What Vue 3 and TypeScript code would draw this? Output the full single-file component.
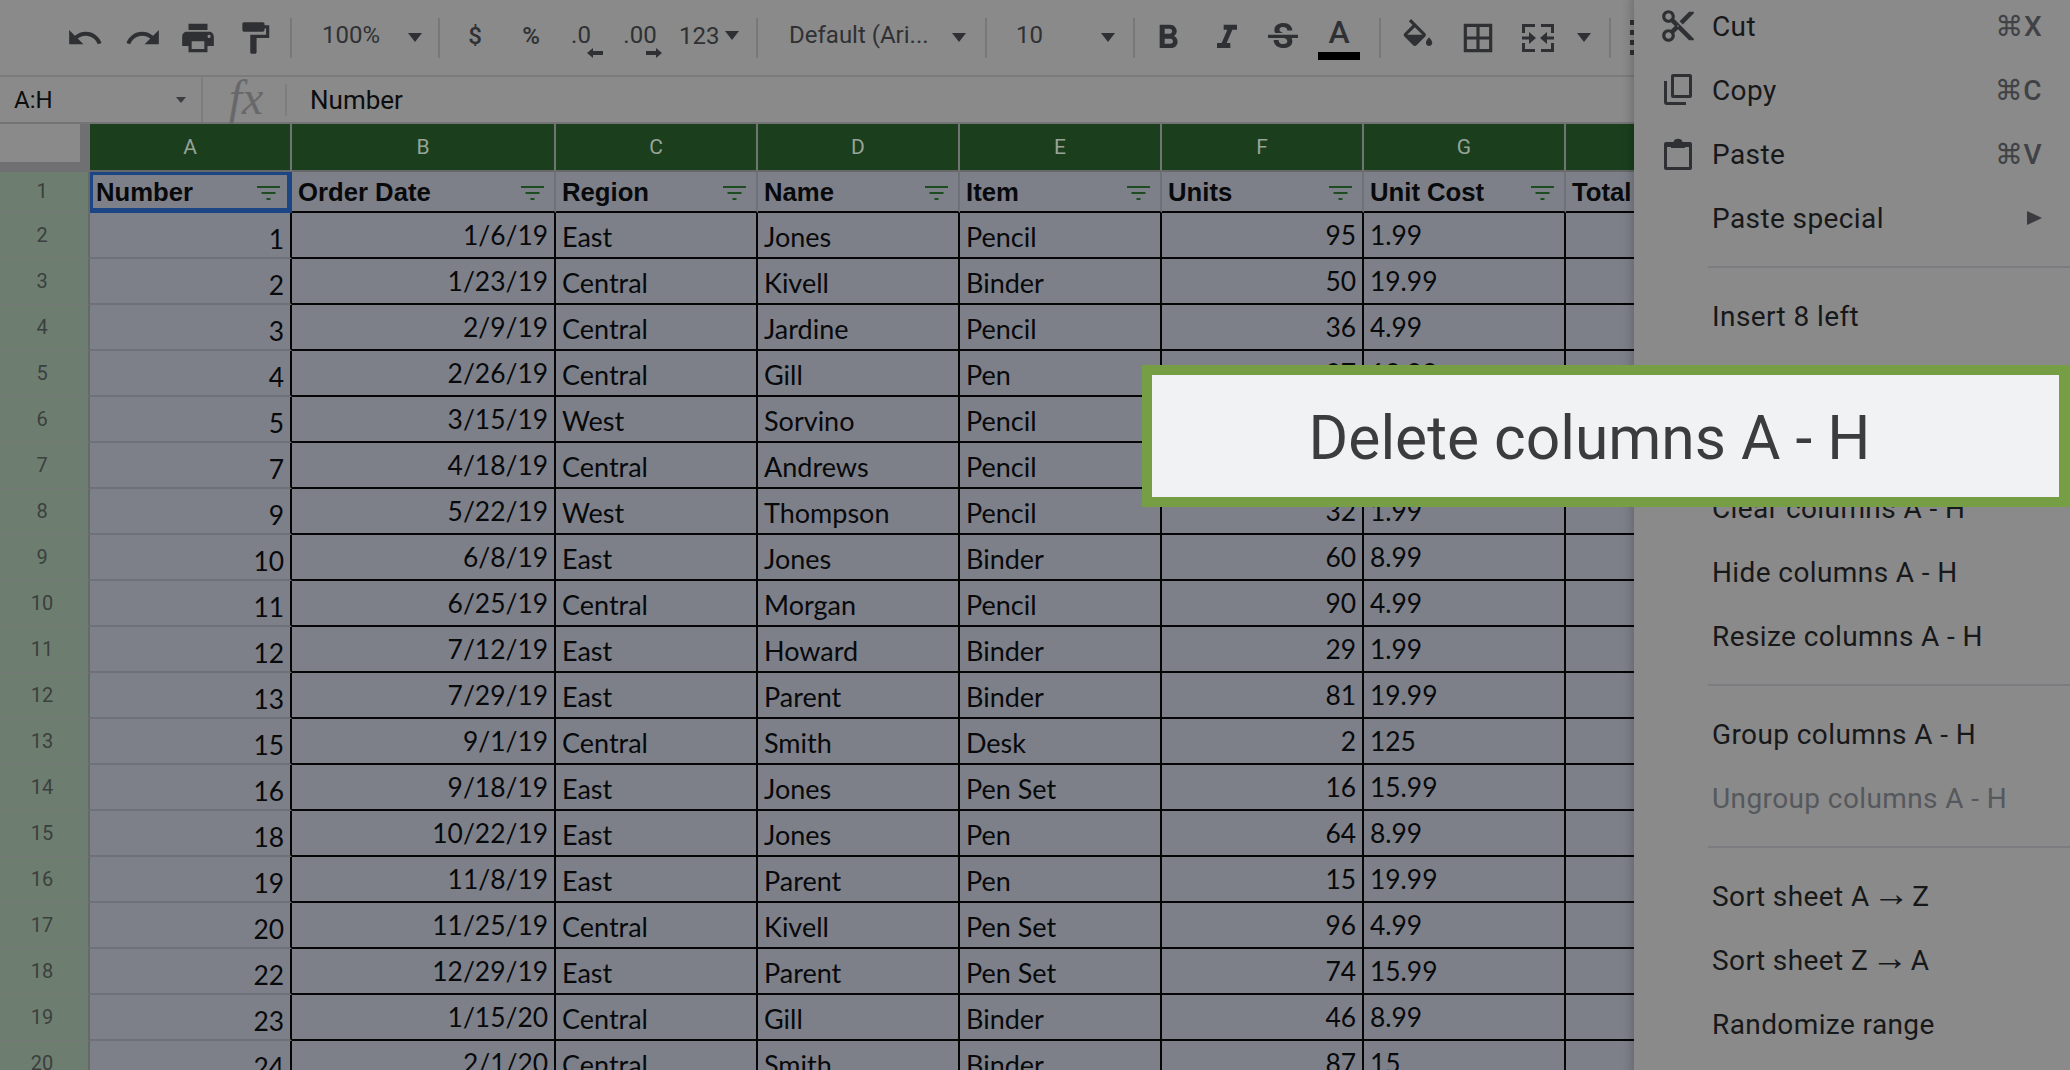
<script setup lang="ts">
interface Row { n: string; num: string; date: string; region: string; name: string; item: string; units: string; cost: string }
const raw = `1|1/6/19|East|Jones|Pencil|95|1.99
2|1/23/19|Central|Kivell|Binder|50|19.99
3|2/9/19|Central|Jardine|Pencil|36|4.99
4|2/26/19|Central|Gill|Pen|27|19.99
5|3/15/19|West|Sorvino|Pencil|56|2.99
7|4/18/19|Central|Andrews|Pencil|75|1.99
9|5/22/19|West|Thompson|Pencil|32|1.99
10|6/8/19|East|Jones|Binder|60|8.99
11|6/25/19|Central|Morgan|Pencil|90|4.99
12|7/12/19|East|Howard|Binder|29|1.99
13|7/29/19|East|Parent|Binder|81|19.99
15|9/1/19|Central|Smith|Desk|2|125
16|9/18/19|East|Jones|Pen Set|16|15.99
18|10/22/19|East|Jones|Pen|64|8.99
19|11/8/19|East|Parent|Pen|15|19.99
20|11/25/19|Central|Kivell|Pen Set|96|4.99
22|12/29/19|East|Parent|Pen Set|74|15.99
23|1/15/20|Central|Gill|Binder|46|8.99
24|2/1/20|Central|Smith|Binder|87|15`
const rows: Row[] = raw.split('\n').map((l, i) => {
  const p = l.split('|')
  return { n: String(i + 2), num: p[0], date: p[1], region: p[2], name: p[3], item: p[4], units: p[5], cost: p[6] }
})
const cols = ['A', 'B', 'C', 'D', 'E', 'F', 'G', '']
const heads = ['Number', 'Order Date', 'Region', 'Name', 'Item', 'Units', 'Unit Cost', 'Total']
type Entry = { label?: string; key?: string; icon?: string; sub?: boolean; off?: boolean; sep?: boolean; sort?: [string, string] }
const menu: Entry[] = [
  { label: 'Cut', key: 'X', icon: 'cut' },
  { label: 'Copy', key: 'C', icon: 'copy' },
  { label: 'Paste', key: 'V', icon: 'paste' },
  { label: 'Paste special', sub: true },
  { sep: true },
  { label: 'Insert 8 left' },
  { label: 'Insert 8 right' },
  { label: 'Delete columns A - H' },
  { label: 'Clear columns A - H' },
  { label: 'Hide columns A - H' },
  { label: 'Resize columns A - H' },
  { sep: true },
  { label: 'Group columns A - H' },
  { label: 'Ungroup columns A - H', off: true },
  { sep: true },
  { sort: ['Sort sheet A ', ' Z'] },
  { sort: ['Sort sheet Z ', ' A'] },
  { label: 'Randomize range' },
]
</script>

<template>
  <div class="page">
    <div class="toolbar">
      <span class="tb w56"><svg class="ic" viewBox="0 0 24 24"><path d="M12.5 8c-2.65 0-5.05.99-6.9 2.6L2 7v9h9l-3.62-3.62c1.39-1.16 3.16-1.88 5.12-1.88 3.54 0 6.55 2.31 7.6 5.5l2.37-.78C21.08 11.03 17.15 8 12.5 8z"/></svg></span>
      <span class="tb w60"><svg class="ic" viewBox="0 0 24 24"><path d="M18.4 10.6C16.55 8.99 14.15 8 11.5 8c-4.65 0-8.58 3.03-9.96 7.22L3.9 16c1.05-3.19 4.05-5.5 7.6-5.5 1.95 0 3.73.72 5.12 1.88L13 16h9V7l-3.6 3.6z"/></svg></span>
      <span class="tb w50"><svg class="ic" viewBox="0 0 24 24"><path d="M19 8H5c-1.66 0-3 1.34-3 3v6h4v4h12v-4h4v-6c0-1.66-1.34-3-3-3zm-3 11H8v-5h8v5zm3-7c-.55 0-1-.45-1-1s.45-1 1-1 1 .45 1 1-.45 1-1 1zm-1-9H6v4h12V3z"/></svg></span>
      <span class="tb w58 nudge"><svg class="ic" viewBox="0 0 24 24"><path d="M18 4V3c0-.55-.45-1-1-1H5c-.55 0-1 .45-1 1v4c0 .55.45 1 1 1h12c.55 0 1-.45 1-1V6h1v4H9v11c0 .55.45 1 1 1h2c.55 0 1-.45 1-1v-9h8V4h-3z"/></svg></span>
      <i class="sep gap9"></i>
      <span class="drop zoom"><span>100%</span><b class="caret"></b></span>
      <i class="sep"></i>
      <span class="tb w70 txt dollar">$</span>
      <span class="tb w42 txt pct">%</span>
      <span class="tb w58 txt dec">.0<svg class="arr" viewBox="0 0 16 10"><path d="M0 5l6-5v3h10v4H6v3z"/></svg></span>
      <span class="tb w60 txt dec">.00<svg class="arr ar" viewBox="0 0 16 10"><path d="M16 5l-6-5v3H0v4h10v3z"/></svg></span>
      <span class="tb w86 txt fmt">123<b class="caret"></b></span>
      <i class="sep"></i>
      <span class="drop font"><span>Default (Ari...</span><b class="caret"></b></span>
      <i class="sep"></i>
      <span class="drop size"><span>10</span><b class="caret"></b></span>
      <i class="sep"></i>
      <span class="tb w62 nudge4"><svg class="ic fmtic" viewBox="0 0 24 24"><path d="M15.6 10.79c.97-.67 1.65-1.77 1.65-2.79 0-2.26-1.75-4-4-4H7v14h7.04c2.09 0 3.71-1.7 3.71-3.79 0-1.52-.86-2.82-2.15-3.42zM10 6.5h3c.83 0 1.5.67 1.5 1.5s-.67 1.5-1.5 1.5h-3v-3zm3.5 9H10v-3h3.5c.83 0 1.5.67 1.5 1.5s-.67 1.5-1.5 1.5z"/></svg></span>
      <span class="tb w56 nudge4"><svg class="ic fmtic" viewBox="0 0 24 24"><path d="M10 4v3h2.21l-3.42 8H6v3h8v-3h-2.21l3.42-8H18V4z"/></svg></span>
      <span class="tb w56 nudge4"><svg class="ic fmtic" viewBox="0 0 24 24"><path d="M6.85 7.08C6.85 4.37 9.45 3 12.24 3c1.64 0 3 .49 3.9 1.28.77.65 1.46 1.73 1.46 3.24h-3.01c0-.31-.05-.59-.15-.85-.29-.86-1.2-1.28-2.25-1.28-1.86 0-2.34 1.02-2.34 1.7 0 .48.25.88.74 1.21.38.25.77.48 1.41.7H7.39c-.21-.34-.54-.89-.54-1.92zM21 12v-2H3v2h9.62c1.15.45 1.96.75 1.96 1.97 0 1-.81 1.67-2.28 1.67-1.54 0-2.93-.54-2.93-2.51H6.4c0 .55.08 1.13.24 1.58.81 2.29 3.29 3.3 5.67 3.3 2.27 0 5.3-.89 5.3-4.05 0-.3-.01-1.16-.48-1.94H21V12z"/></svg></span>
      <span class="tb w60 colorA"><span class="a">A</span><i class="bar"></i></span>
      <i class="sep gap10"></i>
      <span class="tb w68 nudge"><svg class="ic" viewBox="0 0 24 24"><path d="M16.56 8.94L7.62 0 6.21 1.41l2.38 2.38-5.15 5.15c-.59.59-.59 1.54 0 2.12l5.5 5.5c.29.29.68.44 1.06.44s.77-.15 1.06-.44l5.5-5.5c.59-.58.59-1.53 0-2.12zM5.21 10L10 5.21 14.79 10H5.21zM19 11.5s-2 2.17-2 3.5c0 1.1.9 2 2 2s2-.9 2-2c0-1.33-2-3.5-2-3.5z"/></svg></span>
      <span class="tb w58"><svg class="ic" viewBox="0 0 24 24"><path d="M3 3v18h18V3H3zm8 16H5v-6h6v6zm0-8H5V5h6v6zm8 8h-6v-6h6v6zm0-8h-6V5h6v6z"/></svg></span>
      <span class="tb w62"><svg class="merge" viewBox="0 0 32 28"><path d="M0 0h13v3H3v6H0zM19 0h13v9h-3V3H19zM0 19h3v6h10v3H0zM29 19h3v9H19v-3h10z"/><path d="M0 12.5h7V8l7 6-7 6v-4.5H0zM32 12.5h-7V8l-7 6 7 6v-4.5h7z"/></svg></span>
      <span class="tb w30"><b class="caret"></b></span>
      <i class="sep gap10"></i>
      <span class="dots"><i></i><i></i><i></i><i></i></span>
    </div>

    <div class="formula">
      <div class="namebox"><span>A:H</span><b class="caret small"></b></div>
      <div class="fx">fx</div>
      <div class="ftext">Number</div>
    </div>

    <div class="grid">
      <div class="corner"><i></i></div>
      <div v-for="(c, i) in cols" :key="'c' + i" class="colhead">{{ c }}</div>

      <div class="rowhead first">1</div>
      <div v-for="(h, i) in heads" :key="'h' + i" class="hcell" :class="{ sel: i === 0 }">
        <span>{{ h }}</span>
        <svg v-if="i < 7" class="filter" viewBox="0 0 23 14"><path d="M0 0h23v2H0zM4.5 6h14v2h-14zM9.5 12h4v2h-4z"/></svg>
      </div>

      <template v-for="r in rows" :key="r.n">
        <div class="rowhead">{{ r.n }}</div>
        <div class="cell acol">{{ r.num }}</div>
        <div class="cell right">{{ r.date }}</div>
        <div class="cell">{{ r.region }}</div>
        <div class="cell">{{ r.name }}</div>
        <div class="cell">{{ r.item }}</div>
        <div class="cell right">{{ r.units }}</div>
        <div class="cell numeric">{{ r.cost }}</div>
        <div class="cell"></div>
      </template>
    </div>

    <div class="menu">
      <template v-for="(m, i) in menu" :key="i">
        <div v-if="m.sep" class="msep"></div>
        <div v-else class="mitem" :class="{ off: m.off }">
          <span class="micon">
            <svg v-if="m.icon === 'cut'" viewBox="0 0 24 24" class="mi-cut"><path d="M9.64 7.64c.23-.5.36-1.05.36-1.64 0-2.21-1.79-4-4-4S2 3.79 2 6s1.79 4 4 4c.59 0 1.14-.13 1.64-.36L10 12l-2.36 2.36C7.14 14.13 6.59 14 6 14c-2.21 0-4 1.79-4 4s1.79 4 4 4 4-1.79 4-4c0-.59-.13-1.14-.36-1.64L12 14l7 7h3v-1L9.64 7.64zM6 8c-1.1 0-2-.89-2-2s.9-2 2-2 2 .89 2 2-.9 2-2 2zm0 12c-1.1 0-2-.89-2-2s.9-2 2-2 2 .89 2 2-.9 2-2 2zm6-7.5c-.28 0-.5-.22-.5-.5s.22-.5.5-.5.5.22.5.5-.22.5-.5.5zM19 3l-6 6 2 2 7-7V3z"/></svg>
            <svg v-else-if="m.icon === 'copy'" viewBox="0 0 28 32" class="mi"><path d="M9 0h17a2 2 0 0 1 2 2v20a2 2 0 0 1-2 2H9a2 2 0 0 1-2-2V2a2 2 0 0 1 2-2zm1 3v18h15V3z"/><path d="M0 7h3v21h19v3H3a3 3 0 0 1-3-3z"/></svg>
            <svg v-else-if="m.icon === 'paste'" viewBox="0 0 28 32" class="mi"><path d="M2 4h7.5a4.6 4 0 0 1 9 0H26a2 2 0 0 1 2 2v24a2 2 0 0 1-2 2H2a2 2 0 0 1-2-2V6a2 2 0 0 1 2-2zm1 5v20h22V9H21v1H7V9z"/></svg>
          </span>
          <span v-if="m.sort" class="mlabel">{{ m.sort[0] }}<span class="marrow">→</span>{{ m.sort[1] }}</span>
          <span v-else class="mlabel">{{ m.label }}</span>
          <span v-if="m.key" class="mkey">⌘{{ m.key }}</span>
          <i v-if="m.sub" class="msub"></i>
        </div>
      </template>
    </div>

    <div class="callout"><span>Delete columns A - H</span></div>
  </div>
</template>

<style>
html, body { margin: 0; overflow: hidden; background: #8a8a8a; }
</style>

<style scoped>
.page { position: relative; width: 2070px; height: 1070px; overflow: hidden; background: #8a8a8a; font-family: Roboto, sans-serif; color: #2f3134; display: flex; flex-direction: column; }

.toolbar { height: 75px; padding-left: 57px; display: flex; align-items: center; box-sizing: content-box; border-bottom: 2px solid #7b7b7d; flex: none; font-size: 24px; white-space: nowrap; }
.tb { display: flex; align-items: center; justify-content: center; height: 56px; position: relative; flex: none; box-sizing: border-box; }
.w30 { width: 30px; } .w42 { width: 42px; } .w50 { width: 50px; } .w56 { width: 56px; } .w58 { width: 58px; }
.w60 { width: 60px; } .w62 { width: 62px; } .w68 { width: 68px; } .w70 { width: 70px; } .w86 { width: 86px; }
.nudge { padding-left: 5px; }
.nudge4 { padding-left: 3px; }
.ic { width: 38px; height: 38px; fill: #2e3033; flex: none; }
.ic.fmtic { width: 40px; height: 40px; }
.merge { width: 32px; height: 28px; fill: #2e3033; flex: none; }
.sep { width: 2px; height: 40px; background: #77787b; flex: none; }
.gap9 { margin-left: 9px; }
.gap10 { margin-left: 10px; }
.drop { display: flex; align-items: center; justify-content: space-between; box-sizing: border-box; flex: none; height: 56px; }
.drop span { position: relative; top: -3px; }
.zoom { width: 146px; padding: 0 16px 0 30px; }
.font { width: 227px; padding: 0 19px 0 31px; }
.size { width: 146px; padding: 0 18px 0 29px; }
.caret { width: 0; height: 0; border-left: 7.5px solid transparent; border-right: 7.5px solid transparent; border-top: 9px solid #2e3033; display: block; flex: none; }
.caret.small { border-left-width: 5px; border-right-width: 5px; border-top-width: 6px; border-top-color: #3a3c3f; }
.txt { font-size: 24px; padding-bottom: 4px; }
.dollar, .pct { font-weight: 500; }
.dec { font-size: 24px; padding-bottom: 6px; }
.arr { position: absolute; width: 16px; height: 10px; left: 35px; bottom: 8px; fill: #2e3033; }
.arr.ar { left: 36px; }
.fmt { justify-content: flex-start; padding-left: 9px; gap: 6px; }
.colorA { flex-direction: column; justify-content: flex-start; }
.a { font-size: 32px; line-height: 34px; margin-top: 5px; font-weight: 500; }
.bar { width: 42px; height: 8px; background: #000; margin-top: 3px; display: block; }
.dots { display: flex; flex-direction: column; gap: 5px; margin-left: 19px; flex: none; }
.dots i { width: 4px; height: 5px; background: #2e3033; display: block; }

.formula { height: 45px; display: flex; align-items: center; border-bottom: 2px solid #747476; flex: none; }
.namebox { width: 203px; height: 100%; box-sizing: border-box; padding: 0 15px 0 14px; display: flex; align-items: center; justify-content: space-between; font-size: 24px; color: #0c0d0e; border-right: 2px solid #7d7d7f; }
.fx { width: 84px; height: 32px; box-sizing: border-box; font: italic 48px/28px "Liberation Serif", serif; color: #68686a; text-align: center; border-right: 2px solid #7d7d7f; padding-left: 4px; }
.ftext { font-size: 26px; color: #0c0d0e; margin-left: 23px; }

.grid { display: grid; grid-template-columns: 90px 202px 264px 202px 202px 202px 202px 202px 202px; grid-template-rows: 48px 41px; grid-auto-rows: 46px; flex: none; }
.corner { background: #707072; }
.corner i { display: block; width: 80px; height: 38px; background: #8a8a8a; }
.colhead { background: #1b3f1d; color: #98a399; font-size: 21px; display: flex; align-items: center; justify-content: center; border-right: 2px solid #707472; border-bottom: 2px solid #66686a; box-sizing: border-box; }
.rowhead { background: #6d7e70; color: #3b3f3e; font-size: 20px; display: flex; align-items: center; justify-content: center; box-sizing: border-box; border-right: 2px solid #646a68; border-bottom: 1px solid #757876; padding: 0 4px 2px 0; }
.hcell { background: #7d8089; color: #08090b; font: bold 25.7px "Liberation Sans", sans-serif; display: flex; align-items: center; justify-content: space-between; padding: 2px 10px 0 6px; box-sizing: border-box; border-right: 2px solid #6f7179; border-bottom: 2px solid #050505; white-space: nowrap; overflow: hidden; position: relative; }
.hcell.sel { box-shadow: inset 0 0 0 3px #1c4585; border-color: #1c4585; }
.filter { width: 23px; height: 14px; fill: #1c4c20; flex: none; }
.cell { background: #7d8089; color: #08090b; font: 27px Lato, sans-serif; padding: 2px 6px 0; box-sizing: border-box; display: flex; align-items: center; white-space: nowrap; border-right: 2px solid #050505; border-bottom: 2px solid #050505; }
.right, .numeric { font-size: 26.4px; padding-top: 0; }
.right { justify-content: flex-end; }
.acol { justify-content: flex-end; border-bottom: 2px solid #6f7179; padding-top: 7px; font-size: 26.4px; }

.menu { position: absolute; left: 1634px; top: -6px; width: 436px; background: #8a8a8a; box-shadow: -2px 0 10px rgba(0, 0, 0, .22); height: 1090px; color: #17181a; font-size: 28px; letter-spacing: .4px; }
.mitem { height: 64px; display: flex; align-items: center; padding-left: 26px; padding-right: 28px; position: relative; }
.micon { width: 52px; display: flex; align-items: center; justify-content: flex-start; flex: none; }
.micon svg { fill: #2e3034; display: block; }
.mi-cut { width: 38px; height: 38px; margin-left: -1px; }
.mi { width: 28px; height: 32px; margin-left: 4px; }
.mlabel { flex: 1; white-space: nowrap; }
.marrow { font-family: "Liberation Sans", sans-serif; font-size: 37px; line-height: 1px; letter-spacing: 0; margin: 0 -4.5px; }
.mkey { color: #404246; font-weight: 500; font-family: Roboto, "DejaVu Sans", sans-serif; }
.msub { width: 0; height: 0; border-left: 15px solid #3a3c40; border-top: 7px solid transparent; border-bottom: 7px solid transparent; }
.off .mlabel { color: #55585c; }
.msep { height: 2px; margin: 16px 0 16px 74px; background: #7b7b80; }

.callout { position: absolute; left: 1142px; top: 365px; right: 0; height: 142px; box-sizing: border-box; background: #f1f2f4; border: 10px solid #759e45; border-right-width: 11px; display: flex; align-items: center; justify-content: center; padding: 4px 32px 0 0; }
.callout span { font-size: 60.5px; color: #3c3c3e; white-space: nowrap; }
</style>
